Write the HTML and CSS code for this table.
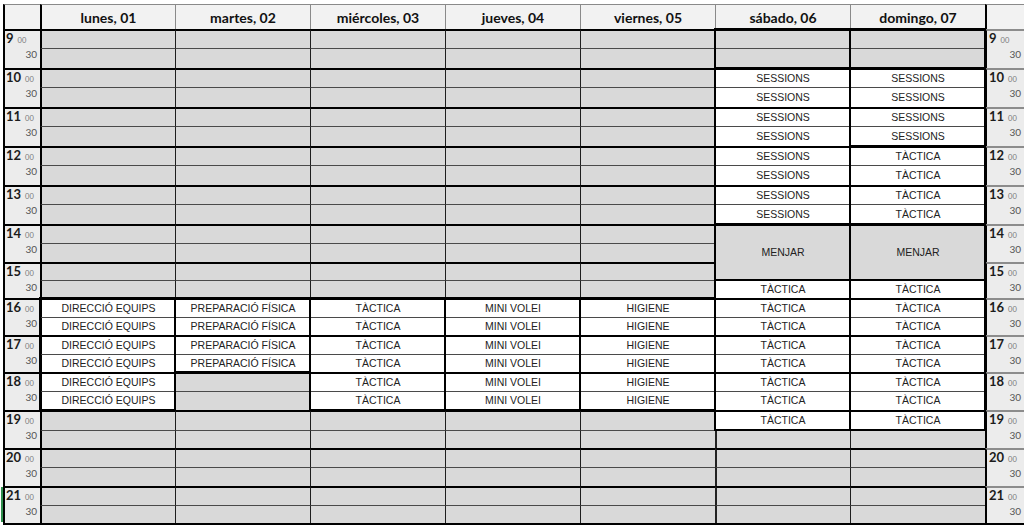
FILE: index.html
```html
<!DOCTYPE html>
<html lang="es">
<head>
<meta charset="utf-8">
<title>Horario</title>
<link rel="stylesheet" href="styles.css">
</head>
<body>
<div class="page">
<div class="sheet">

  <div class="col time">
    <div class="head"></div>
    <div class="hr"><div class="top"><span class="n">9</span><span class="m">00</span></div><div class="half">30</div></div>
    <div class="hr"><div class="top"><span class="n">10</span><span class="m">00</span></div><div class="half">30</div></div>
    <div class="hr"><div class="top"><span class="n">11</span><span class="m">00</span></div><div class="half">30</div></div>
    <div class="hr"><div class="top"><span class="n">12</span><span class="m">00</span></div><div class="half">30</div></div>
    <div class="hr"><div class="top"><span class="n">13</span><span class="m">00</span></div><div class="half">30</div></div>
    <div class="hr"><div class="top"><span class="n">14</span><span class="m">00</span></div><div class="half">30</div></div>
    <div class="hr"><div class="top"><span class="n">15</span><span class="m">00</span></div><div class="half">30</div></div>
    <div class="hr"><div class="top"><span class="n">16</span><span class="m">00</span></div><div class="half">30</div></div>
    <div class="hr"><div class="top"><span class="n">17</span><span class="m">00</span></div><div class="half">30</div></div>
    <div class="hr"><div class="top"><span class="n">18</span><span class="m">00</span></div><div class="half">30</div></div>
    <div class="hr"><div class="top"><span class="n">19</span><span class="m">00</span></div><div class="half">30</div></div>
    <div class="hr"><div class="top"><span class="n">20</span><span class="m">00</span></div><div class="half">30</div></div>
    <div class="hr sel"><div class="top"><span class="n">21</span><span class="m">00</span></div><div class="half">30</div></div>
  </div>

  <!-- lunes -->
  <div class="col day first">
    <div class="head">lunes, 01</div>
    <div class="cell h"></div><div class="cell"></div>
    <div class="cell h"></div><div class="cell"></div>
    <div class="cell h"></div><div class="cell"></div>
    <div class="cell h"></div><div class="cell"></div>
    <div class="cell h"></div><div class="cell"></div>
    <div class="cell h"></div><div class="cell"></div>
    <div class="cell h"></div><div class="cell"></div>
    <div class="block span6">
      <div class="cell h w act">DIRECCIÓ EQUIPS</div><div class="cell w act">DIRECCIÓ EQUIPS</div>
      <div class="cell h w act">DIRECCIÓ EQUIPS</div><div class="cell w act">DIRECCIÓ EQUIPS</div>
      <div class="cell h w act">DIRECCIÓ EQUIPS</div><div class="cell w act">DIRECCIÓ EQUIPS</div>
    </div>
    <div class="cell h"></div><div class="cell"></div>
    <div class="cell h"></div><div class="cell"></div>
    <div class="cell h"></div><div class="cell"></div>
  </div>

  <!-- martes -->
  <div class="col day">
    <div class="head">martes, 02</div>
    <div class="cell h"></div><div class="cell"></div>
    <div class="cell h"></div><div class="cell"></div>
    <div class="cell h"></div><div class="cell"></div>
    <div class="cell h"></div><div class="cell"></div>
    <div class="cell h"></div><div class="cell"></div>
    <div class="cell h"></div><div class="cell"></div>
    <div class="cell h"></div><div class="cell"></div>
    <div class="block span4">
      <div class="cell h w act">PREPARACIÓ FÍSICA</div><div class="cell w act">PREPARACIÓ FÍSICA</div>
      <div class="cell h w act">PREPARACIÓ FÍSICA</div><div class="cell w act">PREPARACIÓ FÍSICA</div>
    </div>
    <div class="cell h"></div><div class="cell"></div>
    <div class="cell h"></div><div class="cell"></div>
    <div class="cell h"></div><div class="cell"></div>
    <div class="cell h"></div><div class="cell"></div>
  </div>

  <!-- miércoles -->
  <div class="col day">
    <div class="head">miércoles, 03</div>
    <div class="cell h"></div><div class="cell"></div>
    <div class="cell h"></div><div class="cell"></div>
    <div class="cell h"></div><div class="cell"></div>
    <div class="cell h"></div><div class="cell"></div>
    <div class="cell h"></div><div class="cell"></div>
    <div class="cell h"></div><div class="cell"></div>
    <div class="cell h"></div><div class="cell"></div>
    <div class="block span6">
      <div class="cell h w act">TÀCTICA</div><div class="cell w act">TÀCTICA</div>
      <div class="cell h w act">TÀCTICA</div><div class="cell w act">TÀCTICA</div>
      <div class="cell h w act">TÀCTICA</div><div class="cell w act">TÀCTICA</div>
    </div>
    <div class="cell h"></div><div class="cell"></div>
    <div class="cell h"></div><div class="cell"></div>
    <div class="cell h"></div><div class="cell"></div>
  </div>

  <!-- jueves -->
  <div class="col day">
    <div class="head">jueves, 04</div>
    <div class="cell h"></div><div class="cell"></div>
    <div class="cell h"></div><div class="cell"></div>
    <div class="cell h"></div><div class="cell"></div>
    <div class="cell h"></div><div class="cell"></div>
    <div class="cell h"></div><div class="cell"></div>
    <div class="cell h"></div><div class="cell"></div>
    <div class="cell h"></div><div class="cell"></div>
    <div class="block span6">
      <div class="cell h w act">MINI VOLEI</div><div class="cell w act">MINI VOLEI</div>
      <div class="cell h w act">MINI VOLEI</div><div class="cell w act">MINI VOLEI</div>
      <div class="cell h w act">MINI VOLEI</div><div class="cell w act">MINI VOLEI</div>
    </div>
    <div class="cell h"></div><div class="cell"></div>
    <div class="cell h"></div><div class="cell"></div>
    <div class="cell h"></div><div class="cell"></div>
  </div>

  <!-- viernes -->
  <div class="col day">
    <div class="head">viernes, 05</div>
    <div class="cell h"></div><div class="cell"></div>
    <div class="cell h"></div><div class="cell"></div>
    <div class="cell h"></div><div class="cell"></div>
    <div class="cell h"></div><div class="cell"></div>
    <div class="cell h"></div><div class="cell"></div>
    <div class="cell h"></div><div class="cell"></div>
    <div class="cell h"></div><div class="cell"></div>
    <div class="block span6">
      <div class="cell h w act">HIGIENE</div><div class="cell w act">HIGIENE</div>
      <div class="cell h w act">HIGIENE</div><div class="cell w act">HIGIENE</div>
      <div class="cell h w act">HIGIENE</div><div class="cell w act">HIGIENE</div>
    </div>
    <div class="cell h"></div><div class="cell"></div>
    <div class="cell h"></div><div class="cell"></div>
    <div class="cell h"></div><div class="cell"></div>
  </div>

  <!-- sábado -->
  <div class="col day weekend">
    <div class="head">sábado, 06</div>
    <div class="block span2">
      <div class="cell h"></div><div class="cell"></div>
    </div>
    <div class="block span8">
      <div class="cell h w act">SESSIONS</div><div class="cell w act">SESSIONS</div>
      <div class="cell h w act">SESSIONS</div><div class="cell w act">SESSIONS</div>
      <div class="cell h w act">SESSIONS</div><div class="cell w act">SESSIONS</div>
      <div class="cell h w act">SESSIONS</div><div class="cell w act">SESSIONS</div>
    </div>
    <div class="block span3">
      <div class="cell h act meal">MENJAR</div>
    </div>
    <div class="block span8">
      <div class="cell w act">TÀCTICA</div>
      <div class="cell h w act">TÀCTICA</div><div class="cell w act">TÀCTICA</div>
      <div class="cell h w act">TÀCTICA</div><div class="cell w act">TÀCTICA</div>
      <div class="cell h w act">TÀCTICA</div><div class="cell w act">TÀCTICA</div>
      <div class="cell h w act">TÀCTICA</div>
    </div>
    <div class="cell"></div>
    <div class="cell h"></div><div class="cell"></div>
    <div class="cell h"></div><div class="cell"></div>
  </div>

  <!-- domingo -->
  <div class="col day">
    <div class="head">domingo, 07</div>
    <div class="block span2">
      <div class="cell h"></div><div class="cell"></div>
    </div>
    <div class="block span4">
      <div class="cell h w act">SESSIONS</div><div class="cell w act">SESSIONS</div>
      <div class="cell h w act">SESSIONS</div><div class="cell w act">SESSIONS</div>
    </div>
    <div class="block span4">
      <div class="cell h w act">TÀCTICA</div><div class="cell w act">TÀCTICA</div>
      <div class="cell h w act">TÀCTICA</div><div class="cell w act">TÀCTICA</div>
    </div>
    <div class="block span3">
      <div class="cell h act meal">MENJAR</div>
    </div>
    <div class="block span8">
      <div class="cell w act">TÀCTICA</div>
      <div class="cell h w act">TÀCTICA</div><div class="cell w act">TÀCTICA</div>
      <div class="cell h w act">TÀCTICA</div><div class="cell w act">TÀCTICA</div>
      <div class="cell h w act">TÀCTICA</div><div class="cell w act">TÀCTICA</div>
      <div class="cell h w act">TÀCTICA</div>
    </div>
    <div class="cell"></div>
    <div class="cell h"></div><div class="cell"></div>
    <div class="cell h"></div><div class="cell"></div>
  </div>

  <div class="col time right">
    <div class="head"></div>
    <div class="hr"><div class="top"><span class="n">9</span><span class="m">00</span></div><div class="half">30</div></div>
    <div class="hr"><div class="top"><span class="n">10</span><span class="m">00</span></div><div class="half">30</div></div>
    <div class="hr"><div class="top"><span class="n">11</span><span class="m">00</span></div><div class="half">30</div></div>
    <div class="hr"><div class="top"><span class="n">12</span><span class="m">00</span></div><div class="half">30</div></div>
    <div class="hr"><div class="top"><span class="n">13</span><span class="m">00</span></div><div class="half">30</div></div>
    <div class="hr"><div class="top"><span class="n">14</span><span class="m">00</span></div><div class="half">30</div></div>
    <div class="hr"><div class="top"><span class="n">15</span><span class="m">00</span></div><div class="half">30</div></div>
    <div class="hr"><div class="top"><span class="n">16</span><span class="m">00</span></div><div class="half">30</div></div>
    <div class="hr"><div class="top"><span class="n">17</span><span class="m">00</span></div><div class="half">30</div></div>
    <div class="hr"><div class="top"><span class="n">18</span><span class="m">00</span></div><div class="half">30</div></div>
    <div class="hr"><div class="top"><span class="n">19</span><span class="m">00</span></div><div class="half">30</div></div>
    <div class="hr"><div class="top"><span class="n">20</span><span class="m">00</span></div><div class="half">30</div></div>
    <div class="hr"><div class="top"><span class="n">21</span><span class="m">00</span></div><div class="half">30</div></div>
  </div>

</div>
</div>
</body>
</html>
```

FILE: styles.css
```css
* { box-sizing: border-box; }
html, body { margin: 0; padding: 0; }
body {
  width: 1024px;
  height: 525px;
  overflow: hidden;
  background: #fff;
  font-family: "Liberation Sans", Arial, sans-serif;
}
.page { padding: 4px 0 0 3px; }
.sheet {
  display: grid;
  grid-template-columns: 37px repeat(7, 135px) 39px;
  grid-template-rows: 25px
    19px 20px 19px 20px 19px 20px 19px 20px 19px 20px
    19px 19px 18px 18px
    19px 18px 19px 18px 19px 19px 20px
    18px 19px 19px 19px 18px;
  border-bottom: 2px solid #000;
  width: max-content;
}
.col {
  grid-row: 1 / -1;
  display: grid;
  grid-template-rows: subgrid;
}
.head {
  background: #f2f2f2;
  border-top: 1px solid #8a8a8a;
  border-left: 1px solid #8a8a8a;
  display: flex;
  align-items: center;
  justify-content: center;
  font-family: Lato, "Liberation Sans", sans-serif;
  font-weight: 700;
  font-size: 14px;
  color: #111;
}
.cell {
  background: #d9d9d9;
  border-top: 1px solid #4a4a4a;
  border-left: 1px solid #1e1e1e;
}
.cell.h { border-top: 2px solid #000; }
.cell.w { background: #fff; }
.first .cell, .first .head { border-left: 2px solid #000; }
.weekend > .cell { border-left: 2px solid #222; }
.act {
  display: flex;
  align-items: center;
  justify-content: center;
  padding-bottom: 2px;
  font-size: 10.5px;
  color: #222;
  white-space: nowrap;
}
.meal { grid-row: span 3; }
.block {
  display: grid;
  grid-template-rows: subgrid;
  outline: 2px solid #000;
  outline-offset: -1px;
  position: relative;
  z-index: 1;
}
.span2 { grid-row: span 2; }
.span3 { grid-row: span 3; }
.span4 { grid-row: span 4; }
.span6 { grid-row: span 6; }
.span8 { grid-row: span 8; }

.time .head { border-left: 2px solid #000; }
.hr {
  grid-row: span 2;
  background: #ececec;
  border-top: 2px solid #000;
  border-left: 2px solid #000;
  display: flex;
  flex-direction: column;
  padding: 1px 3px 0 1px;
  font-family: Lato, "Liberation Sans", sans-serif;
}
.hr .top { display: flex; align-items: baseline; height: 13px; line-height: 13px; }
.hr .n { font-size: 13px; font-weight: 700; color: #1c1c1c; }
.hr .m { font-size: 7.5px; color: #7a7a7a; margin-left: 4px; }
.hr .half { margin-top: 4px; font-size: 10px; line-height: 10px; color: #555; text-align: right; }
.right .hr { border-top-color: #8c8c8c; padding-left: 2px; }
.right .head { border-left: 2px solid #000; }
.hr.sel { box-shadow: -3px 0 0 -1px #2f8f4e; }
```
